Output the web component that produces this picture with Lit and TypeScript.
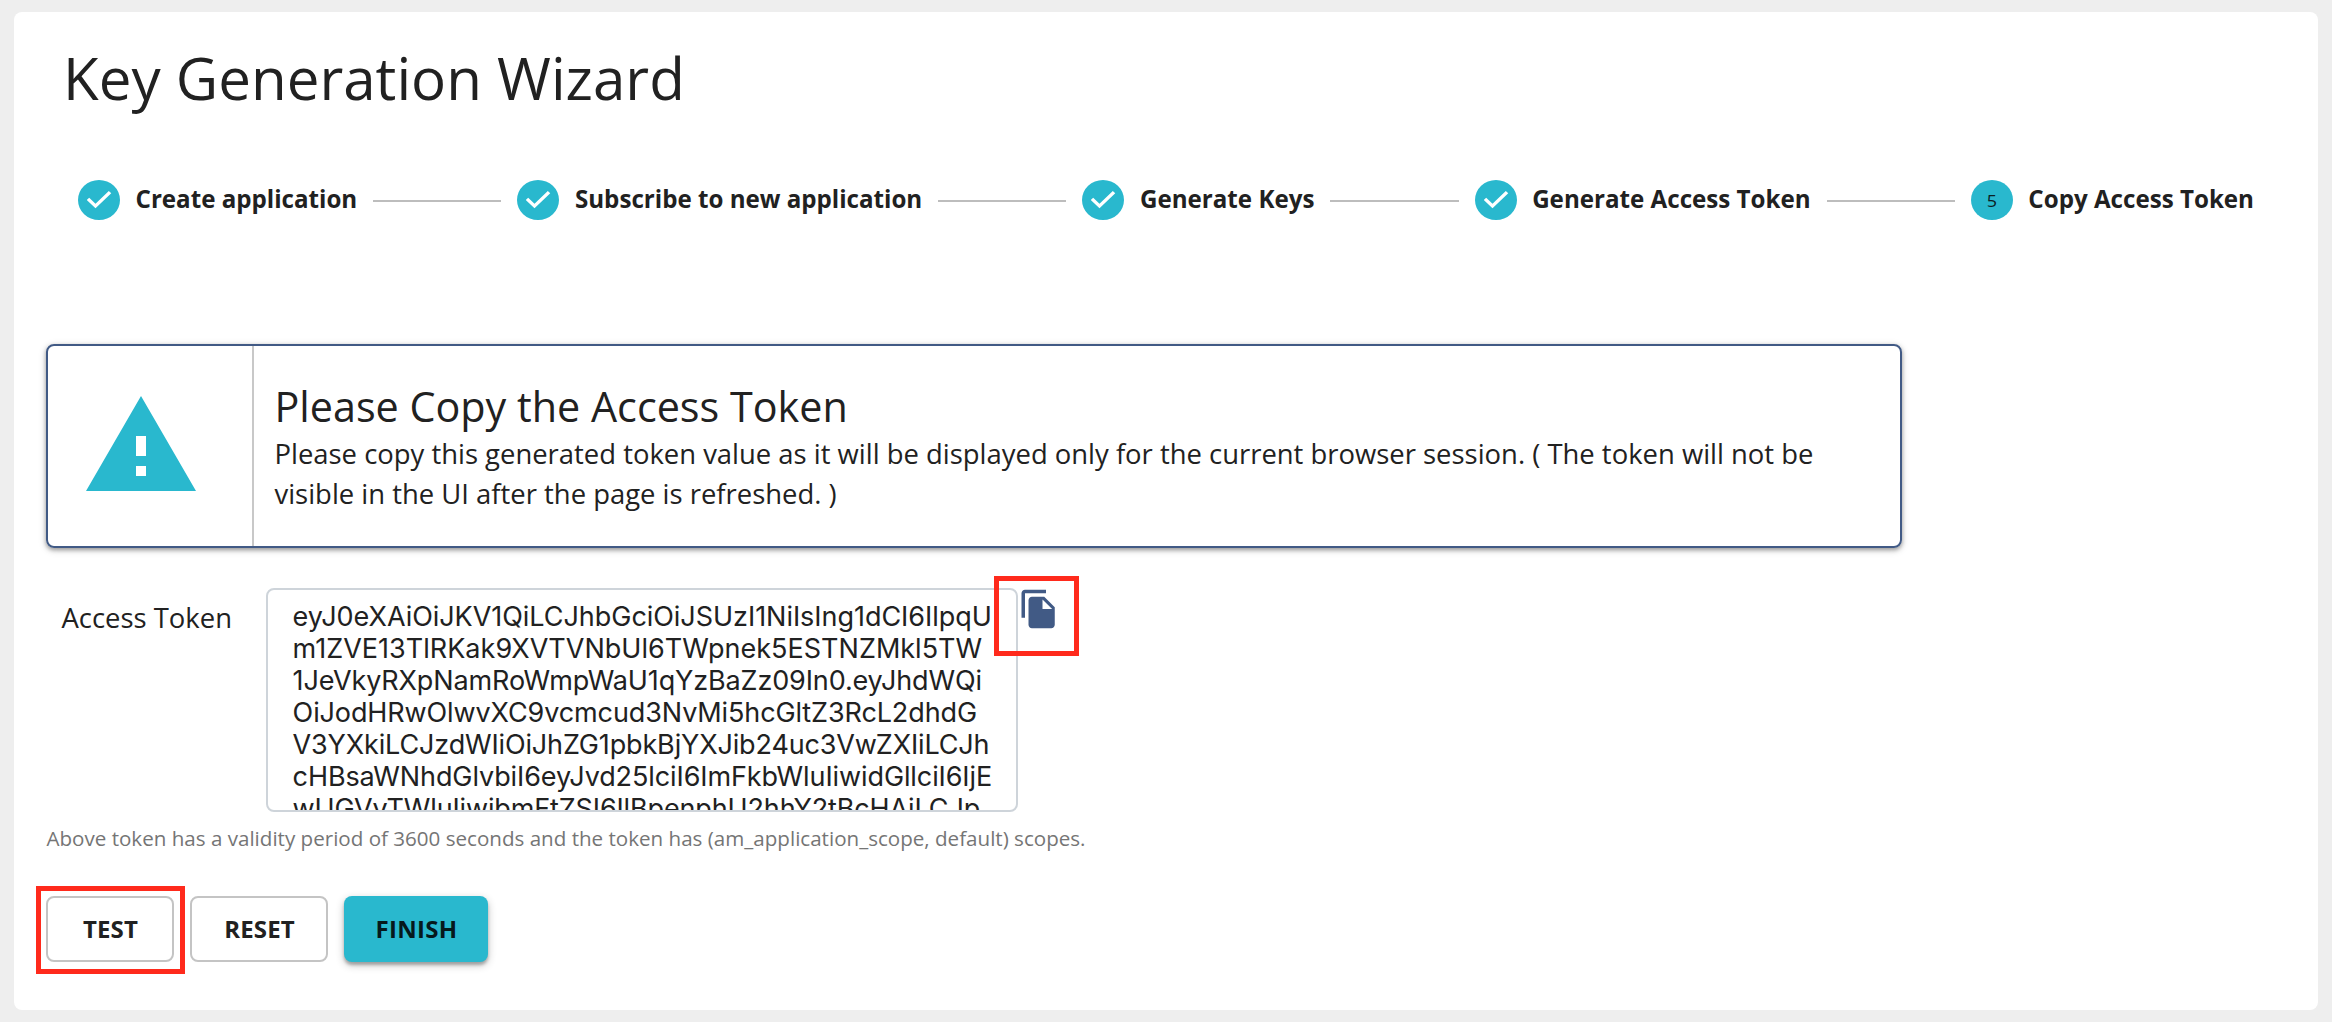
import { LitElement, html, css, svg } from "lit";
import { customElement, property } from "lit/decorators.js";

const STEPS = [
  "Create application",
  "Subscribe to new application",
  "Generate Keys",
  "Generate Access Token",
  "Copy Access Token",
];

/* Token text by visible line, each with its tracking in px. */
const TOKEN_LINES: Array<[string, number]> = [
  ["eyJ0eXAiOiJKV1QiLCJhbGciOiJSUzI1NiIsIng1dCI6IlpqU", -0.04],
  ["m1ZVE13TlRKak9XVTVNbUl6TWpnek5ESTNZMkl5TW", 0.02],
  ["1JeVkyRXpNamRoWmpWaU1qYzBaZz09In0.eyJhdWQi", -0.13],
  ["OiJodHRwOlwvXC9vcmcud3NvMi5hcGltZ3RcL2dhdG", -0.11],
  ["V3YXkiLCJzdWIiOiJhZG1pbkBjYXJib24uc3VwZXIiLCJh", -0.15],
  ["cHBsaWNhdGlvbiI6eyJvd25lciI6ImFkbWluIiwidGllciI6IjE", -0.1],
  ["wUGVyTWluIiwibmFtZSI6IlBpenphU2hhY2tBcHAiLCJp", -0.14],
];

@customElement("wizard-step")
class WizardStep extends LitElement {
  @property({ type: Number }) index = 1;
  @property() label = "";
  @property({ type: Boolean }) done = false;

  static styles = css`
    :host {
      display: flex;
      align-items: center;
      gap: 15.5px;
      flex: none;
    }
    .icon {
      display: block;
      width: 42px;
      height: 40px;
      fill: #29b8ce;
    }
    .number {
      fill: #0b2023;
      font-size: 10.3px;
      text-anchor: middle;
    }
    .label {
      font-size: 24.15px;
      font-weight: 700;
      line-height: 40px;
      padding-bottom: 2px;
      white-space: nowrap;
    }
  `;

  render() {
    return html`
      <svg class="icon" viewBox="0 0 24 24" preserveAspectRatio="none">
        ${this.done
          ? svg`<path d="M12 0a12 12 0 1 0 0 24 12 12 0 0 0 0-24zm-2 17l-5-5 1.4-1.4 3.6 3.6 7.6-7.6L19 8l-9 9z"/>`
          : svg`<circle cx="12" cy="12" r="12"/><text class="number" x="12" y="16">${this.index}</text>`}
      </svg>
      <span class="label">${this.label}</span>
    `;
  }
}

@customElement("app-root")
class AppRoot extends LitElement {
  static styles = css`
    :host {
      display: block;
      box-sizing: border-box;
      height: 1022px;
      padding: 12px 14px;
      background: #eeeeee;
      color: #212121;
      font-family: "Open Sans", "Noto Sans", sans-serif;
      overflow: hidden;
    }
    .card {
      display: flex;
      flex-direction: column;
      box-sizing: border-box;
      height: 998px;
      padding: 29.6px 64px 0 32px;
      border-radius: 8px;
      background: #fff;
    }
    .title {
      margin: 0 0 0 17px;
      font-size: 58.3px;
      font-weight: 400;
      line-height: 72px;
    }
    .steps {
      display: flex;
      align-items: center;
      gap: 16px;
      height: 43px;
      margin: 64.9px 0 0 32px;
    }
    .line {
      flex: 1;
      height: 2px;
      margin-top: 2px;
      background: #bdbdbd;
    }
    .alert {
      display: flex;
      box-sizing: border-box;
      width: 1856px;
      height: 204px;
      margin-top: 122.5px;
      border: 2px solid #415a85;
      border-radius: 8px;
      box-shadow: 0 2px 4px rgba(0, 0, 0, 0.34), 0 2px 8px rgba(0, 0, 0, 0.14);
    }
    .sign {
      display: flex;
      align-items: center;
      box-sizing: border-box;
      width: 206px;
      padding-left: 32.6px;
      border-right: 2px solid #c8c8c8;
    }
    .warning {
      width: 120px;
      height: 120px;
      fill: #29b8ce;
    }
    .message {
      flex: 1;
      display: flex;
      flex-direction: column;
      justify-content: center;
      padding: 0 40px 0 20.5px;
    }
    .heading {
      margin: 0;
      font-size: 41.3px;
      font-weight: 400;
      line-height: 56px;
    }
    .body {
      margin: 0;
      font-size: 27.43px;
      line-height: 40px;
    }
    .field {
      display: flex;
      align-items: flex-start;
      margin-top: 40px;
      height: 224px;
    }
    .name {
      width: 204.5px;
      padding: 9.6px 0 0 15.5px;
      font-size: 27.43px;
      line-height: 40px;
    }
    .token {
      box-sizing: border-box;
      width: 752px;
      height: 224px;
      padding: 11px 0 0 24.6px;
      border: 2px solid #ced4da;
      border-radius: 8px;
      overflow: hidden;
      font-family: Inter, sans-serif;
      font-size: 27px;
      line-height: 32px;
      white-space: nowrap;
    }
    .copy {
      position: relative;
      width: 42px;
      height: 42px;
    }
    .copy-icon {
      display: block;
      width: 42px;
      height: 42px;
      fill: #415a85;
    }
    .mark {
      position: absolute;
      box-sizing: border-box;
      border: 5px solid #ff2a1c;
    }
    .mark-copy {
      left: -24px;
      top: -12px;
      width: 85px;
      height: 80px;
    }
    .mark-test {
      left: -12px;
      top: -12px;
      width: 149px;
      height: 88px;
    }
    .hint {
      margin: 8.7px 0 0 0.5px;
      color: #757575;
      font-size: 20.59px;
      line-height: 34px;
    }
    .actions {
      display: flex;
      gap: 16px;
      margin-top: 41px;
    }
    .button {
      position: relative;
      display: flex;
      align-items: center;
      justify-content: center;
      box-sizing: border-box;
      height: 66px;
      padding-left: 1px;
      border: 2px solid #c4c4c4;
      border-radius: 8px;
      font-size: 24px;
      font-weight: 700;
      letter-spacing: 0.1px;
    }
    .test {
      width: 128px;
    }
    .reset {
      width: 138px;
    }
    .finish {
      width: 144px;
      border: 0;
      background: #29b8ce;
      color: #06191c;
      box-shadow: 0 3px 3px rgba(0, 0, 0, 0.24), 0 3px 8px rgba(0, 0, 0, 0.24);
      letter-spacing: 0.3px;
    }
  `;

  render() {
    return html`
      <main class="card">
        <h1 class="title">Key Generation Wizard</h1>
        <div class="steps">
          ${STEPS.map(
            (label, i) => html`
              ${i ? html`<span class="line"></span>` : null}
              <wizard-step .index=${i + 1} .label=${label} .done=${i < 4}></wizard-step>
            `
          )}
        </div>
        <section class="alert">
          <div class="sign">
            <svg class="warning" viewBox="0 0 24 24">
              <path d="M1 21h22L12 2 1 21zm12-3h-2v-2h2v2zm0-4h-2v-4h2v4z" />
            </svg>
          </div>
          <div class="message">
            <h2 class="heading">Please Copy the Access Token</h2>
            <p class="body">
              Please copy this generated token value as it will be displayed only for the current
              browser session. ( The token will not be visible in the UI after the page is
              refreshed. )
            </p>
          </div>
        </section>
        <div class="field">
          <span class="name">Access Token</span>
          <div class="token">
            ${TOKEN_LINES.map(
              ([text, tracking]) => html`<div style="letter-spacing:${tracking}px">${text}</div>`
            )}
          </div>
          <div class="copy">
            <svg class="copy-icon" viewBox="0 0 24 24">
              <path
                d="M16 1H4c-1.1 0-2 .9-2 2v14h2V3h12V1zm-1 4l6 6v10c0 1.1-.9 2-2 2H7.99C6.89 23 6 22.1 6 21l.01-14c0-1.1.89-2 1.99-2h7zm-1 7h5.5L14 6.5V12z"
              />
            </svg>
            <span class="mark mark-copy"></span>
          </div>
        </div>
        <div class="hint">
          Above token has a validity period of 3600 seconds and the token has
          (am_application_scope, default) scopes.
        </div>
        <div class="actions">
          <div class="button test">TEST<span class="mark mark-test"></span></div>
          <div class="button reset">RESET</div>
          <div class="button finish">FINISH</div>
        </div>
      </main>
    `;
  }
}
